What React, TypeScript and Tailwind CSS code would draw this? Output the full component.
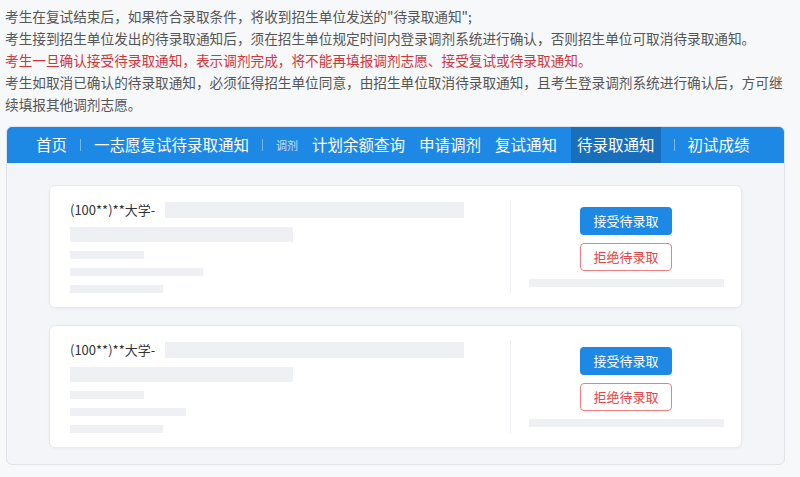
const font = { fontFamily: '"Noto Sans CJK SC", "Noto Sans", sans-serif' };

const navItems = [
  { label: "首页" },
  { sep: true },
  { label: "一志愿复试待录取通知" },
  { sep: true },
  { label: "调剂", small: true },
  { label: "计划余额查询" },
  { label: "申请调剂" },
  { label: "复试通知" },
  { label: "待录取通知", active: true },
  { sep: true },
  { label: "初试成绩" },
];

function Bar({ className }: { className: string }) {
  return <div className={`bg-[#eef0f3] ${className}`} />;
}

function OfferCard({ lastBar }: { lastBar: string }) {
  return (
    <div className="flex rounded-md border border-[#e6e9ee] bg-white pt-[14px] pb-[14px] pl-[20px] shadow-[0_1px_3px_rgba(0,0,0,0.04)]">
      <div className="flex flex-1 flex-col pt-[2px] pr-[46px]">
        <div className="flex h-[16px] items-center">
          <span className="text-[13px] leading-[16px] text-[#333]">(100**)**大学-</span>
          <Bar className="ml-[10px] h-[16px] flex-1" />
        </div>
        <Bar className="mt-[9px] h-[15px] w-[223px]" />
        <Bar className="mt-[9px] h-[8px] w-[74px]" />
        <Bar className={`mt-[9px] h-[8px] ${lastBar}`} />
        <Bar className="mt-[9px] h-[8px] w-[93px]" />
      </div>
      <div className="flex w-[231px] flex-col items-center justify-center gap-[8px] border-l border-[#eeeff2]">
        <button className="h-[28px] w-[92px] rounded-[4px] bg-[#1e88e5] text-[13px] text-white">
          接受待录取
        </button>
        <button className="h-[28px] w-[92px] rounded-[4px] border border-[#ef7d7d] bg-white text-[13px] text-[#e54747]">
          拒绝待录取
        </button>
        <Bar className="h-[8px] w-[195px]" />
      </div>
    </div>
  );
}

export default function App() {
  return (
    <div className="h-[477px] w-[800px] overflow-hidden bg-[#f7f8fa]" style={font}>
      <div className="w-[790px] pt-[5px] pl-[5px] text-[13.65px] leading-[22px] text-[#555]">
        <p>考生在复试结束后，如果符合录取条件，将收到招生单位发送的"待录取通知";</p>
        <p>考生接到招生单位发出的待录取通知后，须在招生单位规定时间内登录调剂系统进行确认，否则招生单位可取消待录取通知。</p>
        <p className="text-[#d2363c]">考生一旦确认接受待录取通知，表示调剂完成，将不能再填报调剂志愿、接受复试或待录取通知。</p>
        <p className="w-[785px]">考生如取消已确认的待录取通知，必须征得招生单位同意，由招生单位取消待录取通知，且考生登录调剂系统进行确认后，方可继续填报其他调剂志愿。</p>
      </div>

      <div className="mt-[11px] ml-[6px] w-[779px] overflow-hidden rounded-md border border-[#dfe3e8] bg-[#f3f5f8]">
        <nav className="flex h-[36px] items-stretch bg-[#1e88e5] pl-[22px] text-white">
          {navItems.map((item, i) =>
            item.sep ? (
              <div key={i} className="flex items-center px-[6px]">
                <div className="h-[12px] w-px bg-white/40" />
              </div>
            ) : (
              <div
                key={i}
                className={`flex items-center ${
                  item.active ? "mx-[7px] bg-[#1a6fbd] px-[6px]" : "px-[7px]"
                } ${item.small ? "text-[11px] text-white/75" : "text-[15.5px]"}`}
              >
                {item.label}
              </div>
            )
          )}
        </nav>
        <div className="flex flex-col gap-[17px] px-[42px] pt-[22px] pb-[16px]">
          <OfferCard lastBar="w-[133px]" />
          <OfferCard lastBar="w-[116px]" />
        </div>
      </div>
    </div>
  );
}
